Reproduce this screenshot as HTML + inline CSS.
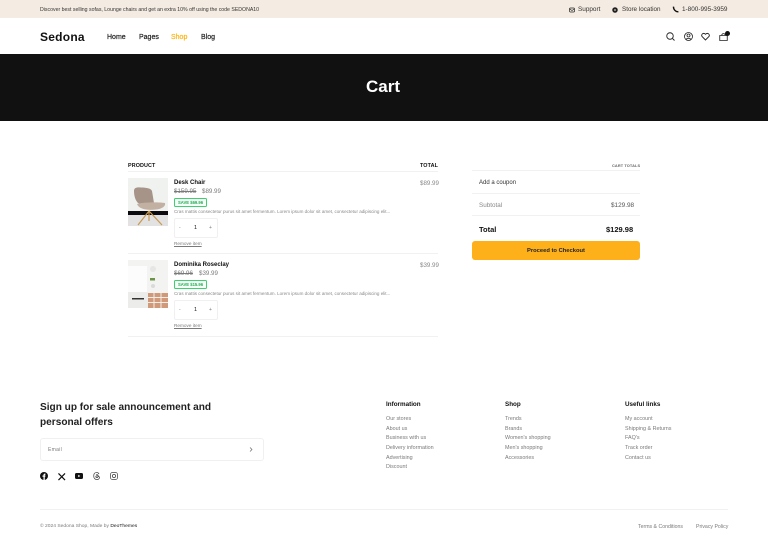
<!DOCTYPE html>
<html lang="en"><head><meta charset="utf-8"><title>Cart</title>
<style>
html,body{margin:0;padding:0;background:#fff;width:768px;height:543px;overflow:hidden}
body{position:relative;font-family:"Liberation Sans",sans-serif;color:#111}
.t{position:absolute;white-space:nowrap;line-height:12px;height:12px}
.b{position:absolute}
.p{font-weight:700}
.g{color:#7a7a7a}
svg{position:absolute;overflow:visible}
.s{text-decoration:line-through}
</style></head><body>
<div class="b" style="left:0;top:0;width:768px;height:18px;background:#f4ebe2"></div>
<div class="t" style="left:40px;top:4px;font-size:5.200px;color:#333">Discover best selling sofas, Lounge chairs and get an extra 10% off using the code SEDONA10</div>
<svg style="left:569px;top:6.500px" width="6" height="6" viewBox="0 0 12 12" fill="none" stroke="#222" stroke-width="1.400"><rect x="1" y="2" width="10" height="8" rx="2"/><path d="M1.500 4 6 7l4.500-3"/></svg>
<div class="t" style="left:578px;top:4px;font-size:6.400px;color:#333">Support</div>
<svg style="left:612px;top:6.500px" width="6" height="6" viewBox="0 0 12 12"><circle cx="6" cy="6" r="5.500" fill="#222"/><path d="M4 6h4M6 4v4" stroke="#f4ebe2" stroke-width="1.200"/></svg>
<div class="t" style="left:622px;top:4px;font-size:6.300px;color:#333">Store location</div>
<svg style="left:672px;top:6px" width="7" height="7" viewBox="0 0 12 12" fill="none" stroke="#111" stroke-width="2.400"><path d="M2.500 1C2.500 6 6 10 11 10"/></svg>
<div class="t" style="left:682px;top:4px;font-size:6.400px;color:#333">1-800-995-3959</div>

<div class="t p" style="left:40px;top:30.500px;font-size:12px;letter-spacing:.25px;color:#111">Sedona</div>
<div class="t" style="left:107px;top:31.500px;font-size:7px;color:#222;-webkit-text-stroke:.2px #222">Home</div>
<div class="t" style="left:139px;top:31.500px;font-size:7px;color:#222;-webkit-text-stroke:.2px #222">Pages</div>
<div class="t" style="left:171px;top:31.500px;font-size:7px;color:#fdb515;-webkit-text-stroke:.2px #fdb515">Shop</div>
<div class="t" style="left:201px;top:31.500px;font-size:7px;color:#222;-webkit-text-stroke:.2px #222">Blog</div>
<svg style="left:666px;top:32px" width="9" height="9" viewBox="0 0 18 18" fill="none" stroke="#222" stroke-width="1.800"><circle cx="8" cy="8" r="6.500"/><path d="M13 13l4 4"/></svg>
<svg style="left:684px;top:32px" width="9" height="9" viewBox="0 0 18 18" fill="none" stroke="#222" stroke-width="1.600"><circle cx="9" cy="9" r="8"/><circle cx="9" cy="7" r="3"/><path d="M4 15c1-3 9-3 10 0"/></svg>
<svg style="left:701px;top:32px" width="9" height="9" viewBox="0 0 18 18" fill="none" stroke="#222" stroke-width="1.800"><path d="M9 16 2.500 9.500C-.5 6 3.500 0 9 4.500 14.500 0 18.500 6 15.500 9.500z"/></svg>
<svg style="left:719px;top:33px" width="9" height="8" viewBox="0 0 18 16" fill="none" stroke="#222" stroke-width="1.700"><path d="M1.500 5h15v10h-15zM5.500 5c0-5 7-5 7 0"/></svg>
<div class="b" style="left:725px;top:31px;width:5px;height:5px;border-radius:50%;background:#111"></div>

<div class="b" style="left:0;top:54px;width:768px;height:67px;background:#111"></div>
<div class="t p" style="left:366px;top:78px;height:18px;line-height:18px;font-size:17px;color:#fff">Cart</div>

<div class="t p" style="left:128px;top:160px;font-size:5.400px;letter-spacing:.1px">PRODUCT</div>
<div class="t p" style="left:420px;top:160px;font-size:5.400px;letter-spacing:.1px">TOTAL</div>
<div class="b" style="left:128px;top:171px;width:310px;height:1px;background:#f1f1f1"></div>

<svg style="left:128px;top:178px" width="40" height="48" viewBox="0 0 40 48"><rect width="40" height="48" fill="#f0f2f0"/><rect y="33" width="40" height="4" fill="#0c0c10"/><rect y="37" width="40" height="11" fill="#e2e2e2"/><path d="M21 33 10 47M21 33l13 14M21 33v10" stroke="#c9994f" stroke-width="1.200" fill="none"/><path d="M6 13c0-3 2-4 7-3.500 6 0 10 1 11 3.500l2 12c-6 2-12 2-16 0C7 22 6 17 6 13z" fill="#a69488"/><path d="M9 26c6-2 22-2 28-1 1 3-3 6-9 6.500-8 1-17 0-19-5.500z" fill="#c2b0a2"/></svg>
<div class="t p" style="left:174px;top:176.500px;font-size:6px">Desk Chair</div>
<div class="t g s" style="left:174px;top:186px;font-size:6.200px">$159.95</div>
<div class="t g" style="left:202px;top:186px;font-size:6.200px">$89.99</div>
<div class="b" style="left:174px;top:198px;width:31px;height:7px;border:.7px solid #3ecf70;border-radius:1.500px;background:#f6fdf8"></div>
<div class="t p" style="left:178px;top:196px;font-size:4.200px;color:#1eae52;margin-top:.5px">SAVE $69.96</div>
<div class="t g" style="left:174px;top:205.500px;font-size:4.560px;color:#8a8a8a">Cras mattis consectetur purus sit amet fermentum. Lorem ipsum dolor sit amet, consectetur adipiscing elit...</div>
<div class="b" style="left:174px;top:218px;width:42px;height:18px;border:1px solid #f0f0f0;border-radius:2px"></div>
<div class="t g" style="left:179px;top:222px;font-size:5px">-</div>
<div class="t" style="left:194px;top:222px;font-size:5.500px">1</div>
<div class="t g" style="left:209px;top:222px;font-size:5px">+</div>
<div class="t g" style="left:174px;top:238px;font-size:4.700px;text-decoration:underline">Remove item</div>
<div class="t g" style="left:420px;top:178px;font-size:6.200px;color:#888">$89.99</div>
<div class="b" style="left:128px;top:253px;width:310px;height:1px;background:#f1f1f1"></div>

<svg style="left:128px;top:260px" width="40" height="48" viewBox="0 0 40 48"><rect width="40" height="48" fill="#f3f3f1"/><path d="M0 6h19v26H0z" fill="#fcfcfc"/><path d="M0 32h20v16H0z" fill="#ececea"/><rect x="4" y="38" width="12" height="1.500" fill="#333"/><rect x="20" y="33" width="20" height="15" fill="#d09a7a"/><path d="M20 37.500h20M20 42.500h20M26 33v15M33 33v15" stroke="#f5ece5" stroke-width="1"/><circle cx="25" cy="9" r="3" fill="#e6e6e6"/><rect x="22" y="18" width="5" height="2.500" fill="#6a9447"/><circle cx="25" cy="26" r="2" fill="#dadada"/></svg>
<div class="t p" style="left:174px;top:259px;font-size:6px">Dominika Roseclay</div>
<div class="t g s" style="left:174px;top:268px;font-size:6.200px">$69.96</div>
<div class="t g" style="left:199px;top:268px;font-size:6.200px">$39.99</div>
<div class="b" style="left:174px;top:280px;width:31px;height:7px;border:.7px solid #3ecf70;border-radius:1.500px;background:#f6fdf8"></div>
<div class="t p" style="left:178px;top:278px;font-size:4.200px;color:#1eae52;margin-top:.5px">SAVE $15.96</div>
<div class="t g" style="left:174px;top:287.500px;font-size:4.560px;color:#8a8a8a">Cras mattis consectetur purus sit amet fermentum. Lorem ipsum dolor sit amet, consectetur adipiscing elit...</div>
<div class="b" style="left:174px;top:300px;width:42px;height:18px;border:1px solid #f0f0f0;border-radius:2px"></div>
<div class="t g" style="left:179px;top:304px;font-size:5px">-</div>
<div class="t" style="left:194px;top:304px;font-size:5.500px">1</div>
<div class="t g" style="left:209px;top:304px;font-size:5px">+</div>
<div class="t g" style="left:174px;top:320px;font-size:4.700px;text-decoration:underline">Remove item</div>
<div class="t g" style="left:420px;top:260px;font-size:6.200px;color:#888">$39.99</div>
<div class="b" style="left:128px;top:336px;width:310px;height:1px;background:#f1f1f1"></div>

<div class="t p" style="left:612px;top:159.500px;font-size:3.900px;color:#666;letter-spacing:.1px">CART TOTALS</div>
<div class="b" style="left:472px;top:170px;width:168px;height:1px;background:#f1f1f1"></div>
<div class="t" style="left:479px;top:176.500px;font-size:6px;color:#333">Add a coupon</div>
<div class="b" style="left:472px;top:193px;width:168px;height:1px;background:#f1f1f1"></div>
<div class="t g" style="left:479px;top:199.500px;font-size:6.300px;color:#888">Subtotal</div>
<div class="t" style="left:611px;top:199.500px;font-size:6.400px;color:#555">$129.98</div>
<div class="b" style="left:472px;top:215px;width:168px;height:1px;background:#f1f1f1"></div>
<div class="t p" style="left:479px;top:223.500px;font-size:7.500px">Total</div>
<div class="t p" style="left:606px;top:223.500px;font-size:7.500px">$129.98</div>
<div class="b" style="left:472px;top:241px;width:168px;height:19px;background:#fdb01a;border-radius:3px"></div>
<div class="t p" style="left:527px;top:245px;font-size:5.800px;color:#222">Proceed to Checkout</div>

<div class="t p" style="left:40px;top:400.500px;height:14px;line-height:14px;font-size:10.100px;color:#222">Sign up for sale announcement and</div>
<div class="t p" style="left:40px;top:415.500px;height:14px;line-height:14px;font-size:10.100px;color:#222">personal offers</div>
<div class="b" style="left:40px;top:438px;width:222px;height:21px;border:1px solid #f0f0f0;border-radius:3px"></div>
<div class="t g" style="left:48px;top:444px;font-size:5px;letter-spacing:.3px">Email</div>
<svg style="left:249px;top:447px" width="4" height="5" viewBox="0 0 4 5" fill="none" stroke="#666" stroke-width=".7"><path d="M1 .5 3 2.500 1 4.500"/></svg>
<svg style="left:40px;top:472px" width="8" height="8" viewBox="0 0 16 16"><circle cx="8" cy="8" r="8" fill="#111"/><path d="M7 16V9.500H5V7h2V5.500C7 3.500 8.500 3 11 3.200v2.200C9.500 5.300 9.500 5.800 9.500 7H11l-.4 2.500H9.500V16z" fill="#fff"/></svg>
<svg style="left:58px;top:473px" width="7.500" height="7.500" viewBox="0 0 16 16" fill="none" stroke="#111" stroke-width="2.600"><path d="M1 1l14 14M15 1 1 15"/></svg>
<svg style="left:75px;top:473px" width="8" height="6" viewBox="0 0 16 12"><rect width="16" height="12" rx="3" fill="#111"/><path d="M6.500 3.500v5l4-2.500z" fill="#fff"/></svg>
<svg style="left:93px;top:472px" width="7" height="8" viewBox="0 0 14 16" fill="none" stroke="#444" stroke-width="1.500"><path d="M12 4C10 0 3 0 1.800 5c-.8 3.500-.5 8 3.700 9.800 4 1.400 7.500-1 7.500-3.500C13 8 8 7 6 8.500c-1.500 1.500 1 3.500 3 2.500 2-1 2-4.500 0-5.500-1-.5-2.500 0-3 1"/></svg>
<svg style="left:110px;top:472px" width="8" height="8" viewBox="0 0 16 16" fill="none" stroke="#444" stroke-width="1.500"><rect x="1" y="1" width="14" height="14" rx="4"/><circle cx="8" cy="8" r="3.200"/></svg>

<div class="t p" style="left:386px;top:399px;font-size:6.300px">Information</div>
<div class="t g" style="left:386px;top:413px;font-size:5.400px">Our stores</div>
<div class="t g" style="left:386px;top:422.500px;font-size:5.400px">About us</div>
<div class="t g" style="left:386px;top:432px;font-size:5.400px">Business with us</div>
<div class="t g" style="left:386px;top:442px;font-size:5.400px">Delivery information</div>
<div class="t g" style="left:386px;top:451.500px;font-size:5.400px">Advertising</div>
<div class="t g" style="left:386px;top:461px;font-size:5.400px">Discount</div>
<div class="t p" style="left:505px;top:399px;font-size:6.300px">Shop</div>
<div class="t g" style="left:505px;top:413px;font-size:5.400px">Trends</div>
<div class="t g" style="left:505px;top:422.500px;font-size:5.400px">Brands</div>
<div class="t g" style="left:505px;top:432px;font-size:5.400px">Women's shopping</div>
<div class="t g" style="left:505px;top:442px;font-size:5.400px">Men's shopping</div>
<div class="t g" style="left:505px;top:451.500px;font-size:5.400px">Accessories</div>
<div class="t p" style="left:625px;top:399px;font-size:6.300px">Useful links</div>
<div class="t g" style="left:625px;top:413px;font-size:5.400px">My account</div>
<div class="t g" style="left:625px;top:422.500px;font-size:5.400px">Shipping &amp; Returns</div>
<div class="t g" style="left:625px;top:432px;font-size:5.400px">FAQ's</div>
<div class="t g" style="left:625px;top:442px;font-size:5.400px">Track order</div>
<div class="t g" style="left:625px;top:451.500px;font-size:5.400px">Contact us</div>

<div class="b" style="left:40px;top:509px;width:688px;height:1px;background:#f1f1f1"></div>
<div class="t g" style="left:40px;top:521px;font-size:4.950px">© 2024 Sedona Shop, Made by <span style="color:#111">DeoThemes</span></div>
<div class="t g" style="left:638px;top:521px;font-size:5.200px">Terms &amp; Conditions</div>
<div class="t g" style="left:696px;top:521px;font-size:5.200px">Privacy Policy</div>
</body></html>
